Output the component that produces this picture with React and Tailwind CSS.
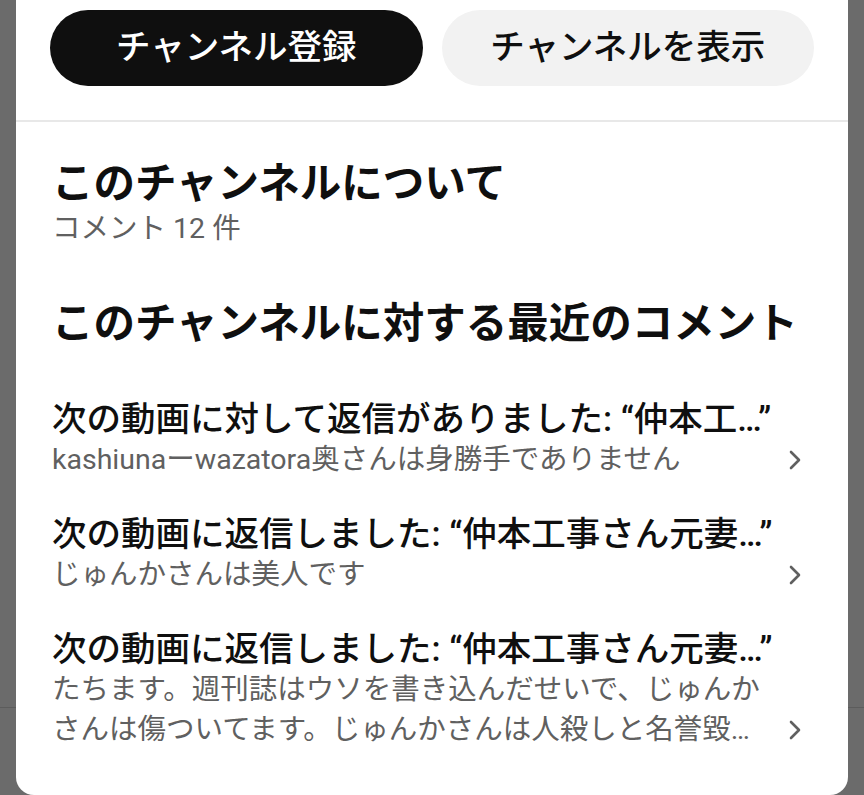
import React from "react";

const comments = [
    {
        title: "次の動画に対して返信がありました: “仲本工…”",
        body: "kashiunaーwazatora奥さんは身勝手でありません",
    },
    {
        title: "次の動画に返信しました: “仲本工事さん元妻…”",
        body: "じゅんかさんは美人です",
    },
    {
        title: "次の動画に返信しました: “仲本工事さん元妻…”",
        body: "たちます。週刊誌はウソを書き込んだせいで、じゅんかさんは傷ついてます。じゅんかさんは人殺しと名誉毀…",
    },
];

function Chevron() {
    return (
        <svg width="14" height="22" viewBox="0 0 14 22" fill="none">
            <polyline
                points="3,3 11,11 3,19"
                stroke="#606060"
                strokeWidth="2.6"
                strokeLinecap="round"
                strokeLinejoin="round"
            />
        </svg>
    );
}

export default function App() {
    return (
        <div
            className="relative h-[795px] w-full overflow-hidden bg-[#6b6b6b] px-4"
            style={{ fontFamily: "Roboto, 'Noto Sans CJK JP', sans-serif" }}
        >
            {/* page behind the sheet */}
            <div className="absolute left-0 right-0 top-[707px] h-px bg-[#5c5c5c]" />

            <div className="relative h-full w-[832px] rounded-b-[18px] bg-white">
                {/* buttons */}
                <div className="flex gap-[19px] px-[34px] pt-[10px] pb-[34px]">
                    <button className="h-[76px] flex-1 rounded-full bg-[#0f0f0f] text-[34.5px] font-medium text-white">
                        チャンネル登録
                    </button>
                    <button className="h-[76px] flex-1 rounded-full bg-[#f2f2f2] text-[34.5px] font-medium text-[#0f0f0f]">
                        チャンネルを表示
                    </button>
                </div>
                <div className="h-[2px] bg-[#e8e8e8]" />

                {/* about */}
                <div className="pl-9 pr-[46px] pt-[37px]">
                    <h2 className="text-[41.5px] font-bold leading-[50px] text-[#0f0f0f]">
                        このチャンネルについて
                    </h2>
                    <p className="text-[28.5px] leading-[40px] text-[#606060]">
                        コメント 12 件
                    </p>

                    <h2 className="mt-[50px] text-[41.5px] font-bold leading-[50px] text-[#0f0f0f]">
                        このチャンネルに対する最近のコメント
                    </h2>

                    <div className="mt-[49px] flex flex-col gap-[33px]">
                        {comments.map((c, i) => (
                            <div key={i} className="flex items-end gap-[11px]">
                                <div className="min-w-0 flex-1">
                                    <p className="whitespace-nowrap text-[34.5px] font-medium leading-[42px] text-[#0f0f0f]">
                                        {c.title}
                                    </p>
                                    <p className="text-[28.5px] leading-[40px] text-[#606060]">
                                        {c.body}
                                    </p>
                                </div>
                                <div className="mb-[9px]">
                                    <Chevron />
                                </div>
                            </div>
                        ))}
                    </div>
                </div>
            </div>
        </div>
    );
}
